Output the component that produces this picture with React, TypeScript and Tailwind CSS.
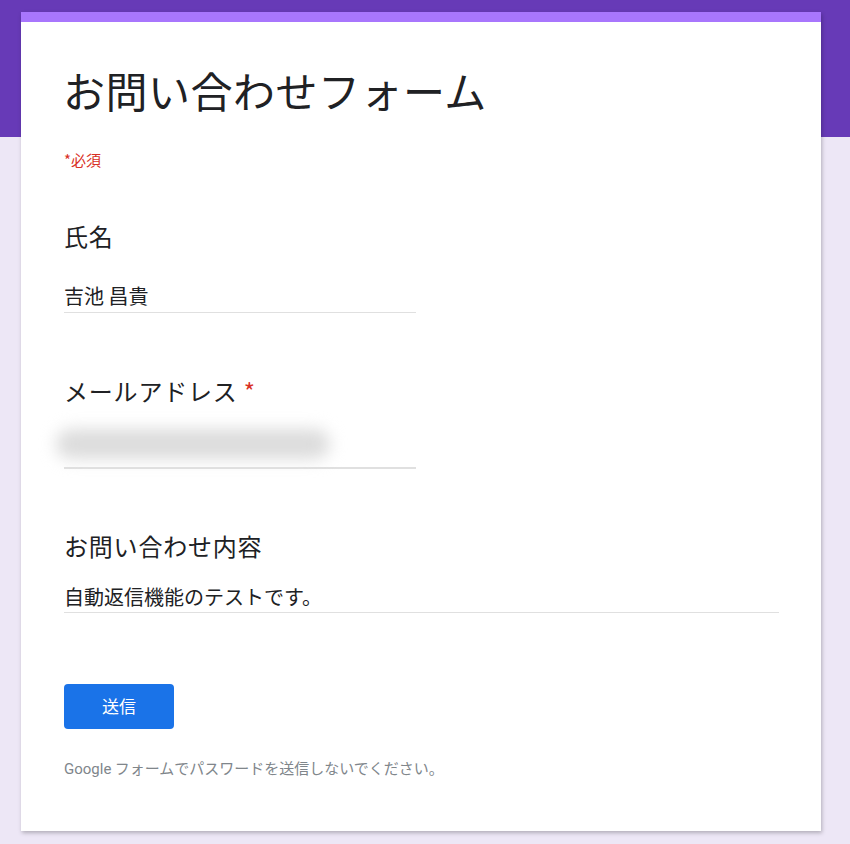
export default function App() {
  const font = { fontFamily: '"Noto Sans CJK JP", "Noto Sans", Roboto, sans-serif' };

  return (
    <div
      className="min-h-screen w-full pt-[12px] pb-[14px] bg-[linear-gradient(#673ab7_0_137px,#ede7f6_137px)]"
      style={font}
    >
      <div className="ml-[21px] w-[800px] bg-white shadow-[1px_2px_4px_rgba(0,0,0,0.25)]">
        <div className="h-[10px] bg-[#a876fd]" />
        <div className="px-[43px] pt-[44px] pb-[52px] text-[#202124]">
          <h1 className="-ml-[1px] text-[42px] leading-[48px] tracking-[0.5px] font-normal">お問い合わせフォーム</h1>
          <div className="mt-[36px] text-[15px] leading-[20px] text-[#d93025]">*必須</div>

          <div className="mt-[50px] text-[24px] leading-[32px] tracking-[0.8px]">氏名</div>
          <div className="mt-[30px] w-[352px] border-b border-[#e0e0e0] pb-[2px] text-[20px] leading-[28px]">
            吉池 昌貴
          </div>

          <div className="mt-[62px] text-[24px] leading-[32px] tracking-[0.8px]">
            メールアドレス <span className="text-[#d93025]">*</span>
          </div>
          <div className="h-[62px] w-[352px] border-b-2 border-[#e0e0e0] flex items-end pb-[8px]">
            <div className="-ml-[8px] h-[30px] w-[274px] rounded-full bg-[#dcdcdc] blur-[8px]" />
          </div>

          <div className="mt-[61px] text-[24px] leading-[32px] tracking-[0.8px]">お問い合わせ内容</div>
          <div className="mt-[21px] w-[715px] border-b border-[#e0e0e0] pb-[1px] text-[20px] leading-[28px]">
            自動返信機能のテストです。
          </div>

          <button className="mt-[71px] block h-[45px] w-[110px] rounded-[4px] bg-[#1a73e8] pb-[2px] text-[17px] text-white">
            送信
          </button>

          <div className="mt-[29px] text-[15px] leading-[20px] text-[#80868b]">
            <span style={{ fontFamily: 'Roboto, sans-serif' }}>Google</span> フォームでパスワードを送信しないでください。
          </div>
        </div>
      </div>
    </div>
  );
}
